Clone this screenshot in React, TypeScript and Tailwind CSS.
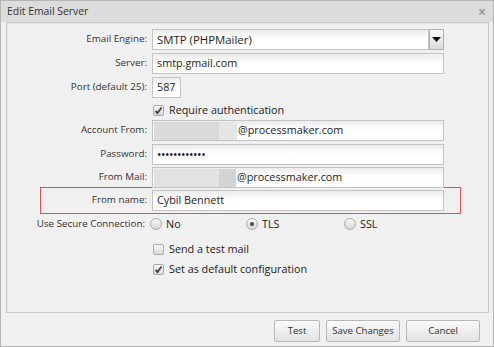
import React from "react";

const font = { fontFamily: '"Open Sans", "Noto Sans", sans-serif' };

function Input({ w = 292, children }: { w?: number; children?: React.ReactNode }) {
  return (
    <div
      className="h-[21px] border border-[#c3c3c3] bg-gradient-to-b from-[#ececec] via-white to-white flex items-center pl-[4px] text-[10.8px] text-[#222] overflow-hidden relative"
      style={{ width: w }}
    >
      {children}
    </div>
  );
}

function Label({ children, w = 144 }: { children: React.ReactNode; w?: number }) {
  return (
    <div className="shrink-0 text-right pr-[5px] text-[9.8px] text-[#333]" style={{ width: w }}>
      {children}
    </div>
  );
}

function Check({ checked }: { checked?: boolean }) {
  return (
    <div className="w-[11px] h-[11px] border border-[#aaa] rounded-[2px] bg-gradient-to-b from-[#f8f8f8] to-[#d8d8d8] flex items-center justify-center">
      {checked && (
        <svg width="9" height="9" viewBox="0 0 9 9">
          <path d="M1.5 5 L3.5 7 L7.5 1.5" stroke="#444" strokeWidth="1.8" fill="none" />
        </svg>
      )}
    </div>
  );
}

function Radio({ checked }: { checked?: boolean }) {
  return (
    <div className="w-[12px] h-[12px] rounded-full border border-[#aaa] bg-gradient-to-b from-[#f8f8f8] to-[#d8d8d8] flex items-center justify-center">
      {checked && <div className="w-[4px] h-[4px] rounded-full bg-[#444]" />}
    </div>
  );
}

function Button({ w, children }: { w: number; children: React.ReactNode }) {
  return (
    <div
      className="h-[22px] border border-[#b8b8b8] rounded-[2px] bg-gradient-to-b from-[#fafafa] to-[#e2e2e2] flex items-center justify-center text-[9.6px] text-[#333]"
      style={{ width: w }}
    >
      {children}
    </div>
  );
}

export default function App() {
  return (
    <div style={font} className="w-[494px] h-[347px] border border-[#b5b5b5] bg-[#f0f0f0] flex flex-col">
      <div className="h-[21px] shrink-0 bg-[#dcdcdc] flex items-center justify-between pl-[6px] pr-[7px]">
        <span className="text-[10.4px] text-[#333]">Edit Email Server</span>
        <span className="text-[14px] leading-none text-[#9a9a9a] font-bold">×</span>
      </div>
      <div className="mx-[5px] mr-[4px] h-[291px] border border-[#c8c8c8] shadow-[inset_1px_1px_0_#e4e4e4] bg-[#f0f0f0] flex flex-col pt-[6px] pl-[1px]">
        <div className="flex items-center">
          <Label>Email Engine:</Label>
          <Input w={277}>
            <span className="text-[11.4px]">SMTP (PHPMailer)</span>
          </Input>
          <div className="w-[15px] h-[21px] border border-[#b0b0b0] bg-gradient-to-b from-[#fafafa] to-[#dcdcdc] flex items-center justify-center">
            <svg width="9" height="5" viewBox="0 0 9 5"><path d="M0 0 H9 L4.5 5 Z" fill="#111" /></svg>
          </div>
        </div>
        <div className="flex items-center mt-[3px]">
          <Label>Server:</Label>
          <Input>smtp.gmail.com</Input>
        </div>
        <div className="flex items-center mt-[3px]">
          <Label>Port (default 25):</Label>
          <Input w={29}>587</Input>
        </div>
        <div className="flex items-center mt-[4px] h-[16px]">
          <div className="w-[145px] shrink-0" />
          <Check checked />
          <span className="ml-[5px] text-[10.8px] text-[#222]">Require authentication</span>
        </div>
        <div className="flex items-center mt-[2px]">
          <Label>Account From:</Label>
          <Input>
            <div className="w-[65px] h-[18px] bg-[#dadada] -ml-[3px]" />
            <div className="w-[18px] h-[18px] bg-[#e6e6e6] mr-[1px]" />
            <span>@processmaker.com</span>
          </Input>
        </div>
        <div className="flex items-center mt-[3px]">
          <Label>Password:</Label>
          <Input>
            <span className="tracking-[-0.5px] text-[12px] leading-none">••••••••••••</span>
          </Input>
        </div>
        <div className="flex items-center mt-[2px]">
          <Label>From Mail:</Label>
          <Input>
            <div className="w-[65px] h-[18px] bg-[#e2e2e2] -ml-[3px]" />
            <div className="w-[17px] h-[18px] bg-[#d4d4d4] mr-[1px]" />
            <span>@processmaker.com</span>
          </Input>
        </div>
        <div className="ml-[32px] w-[421px] h-[27px] border border-[#e05050] flex items-center -mt-[1px]">
          <Label w={111}>From name:</Label>
          <Input>Cybil Bennett</Input>
        </div>
        <div className="flex items-center mt-[2px] h-[16px]">
          <Label w={142}>Use Secure Connection:</Label>
          <div className="flex items-center w-[96px]">
            <Radio />
            <span className="ml-[4px] text-[10.8px] text-[#222]">No</span>
          </div>
          <div className="flex items-center w-[98px]">
            <Radio checked />
            <span className="ml-[4px] text-[10.8px] text-[#222]">TLS</span>
          </div>
          <div className="flex items-center">
            <Radio />
            <span className="ml-[4px] text-[10.8px] text-[#222]">SSL</span>
          </div>
        </div>
        <div className="flex items-center mt-[9px] h-[16px]">
          <div className="w-[145px] shrink-0" />
          <Check />
          <span className="ml-[5px] text-[10.8px] text-[#222]">Send a test mail</span>
        </div>
        <div className="flex items-center mt-[4px] h-[16px]">
          <div className="w-[145px] shrink-0" />
          <Check checked />
          <span className="ml-[5px] text-[10.8px] text-[#222]">Set as default configuration</span>
        </div>
      </div>
      <div className="flex justify-end gap-[6px] pr-[13px] mt-[7px]">
        <Button w={46}>Test</Button>
        <Button w={74}>Save Changes</Button>
        <Button w={74}>Cancel</Button>
      </div>
    </div>
  );
}
